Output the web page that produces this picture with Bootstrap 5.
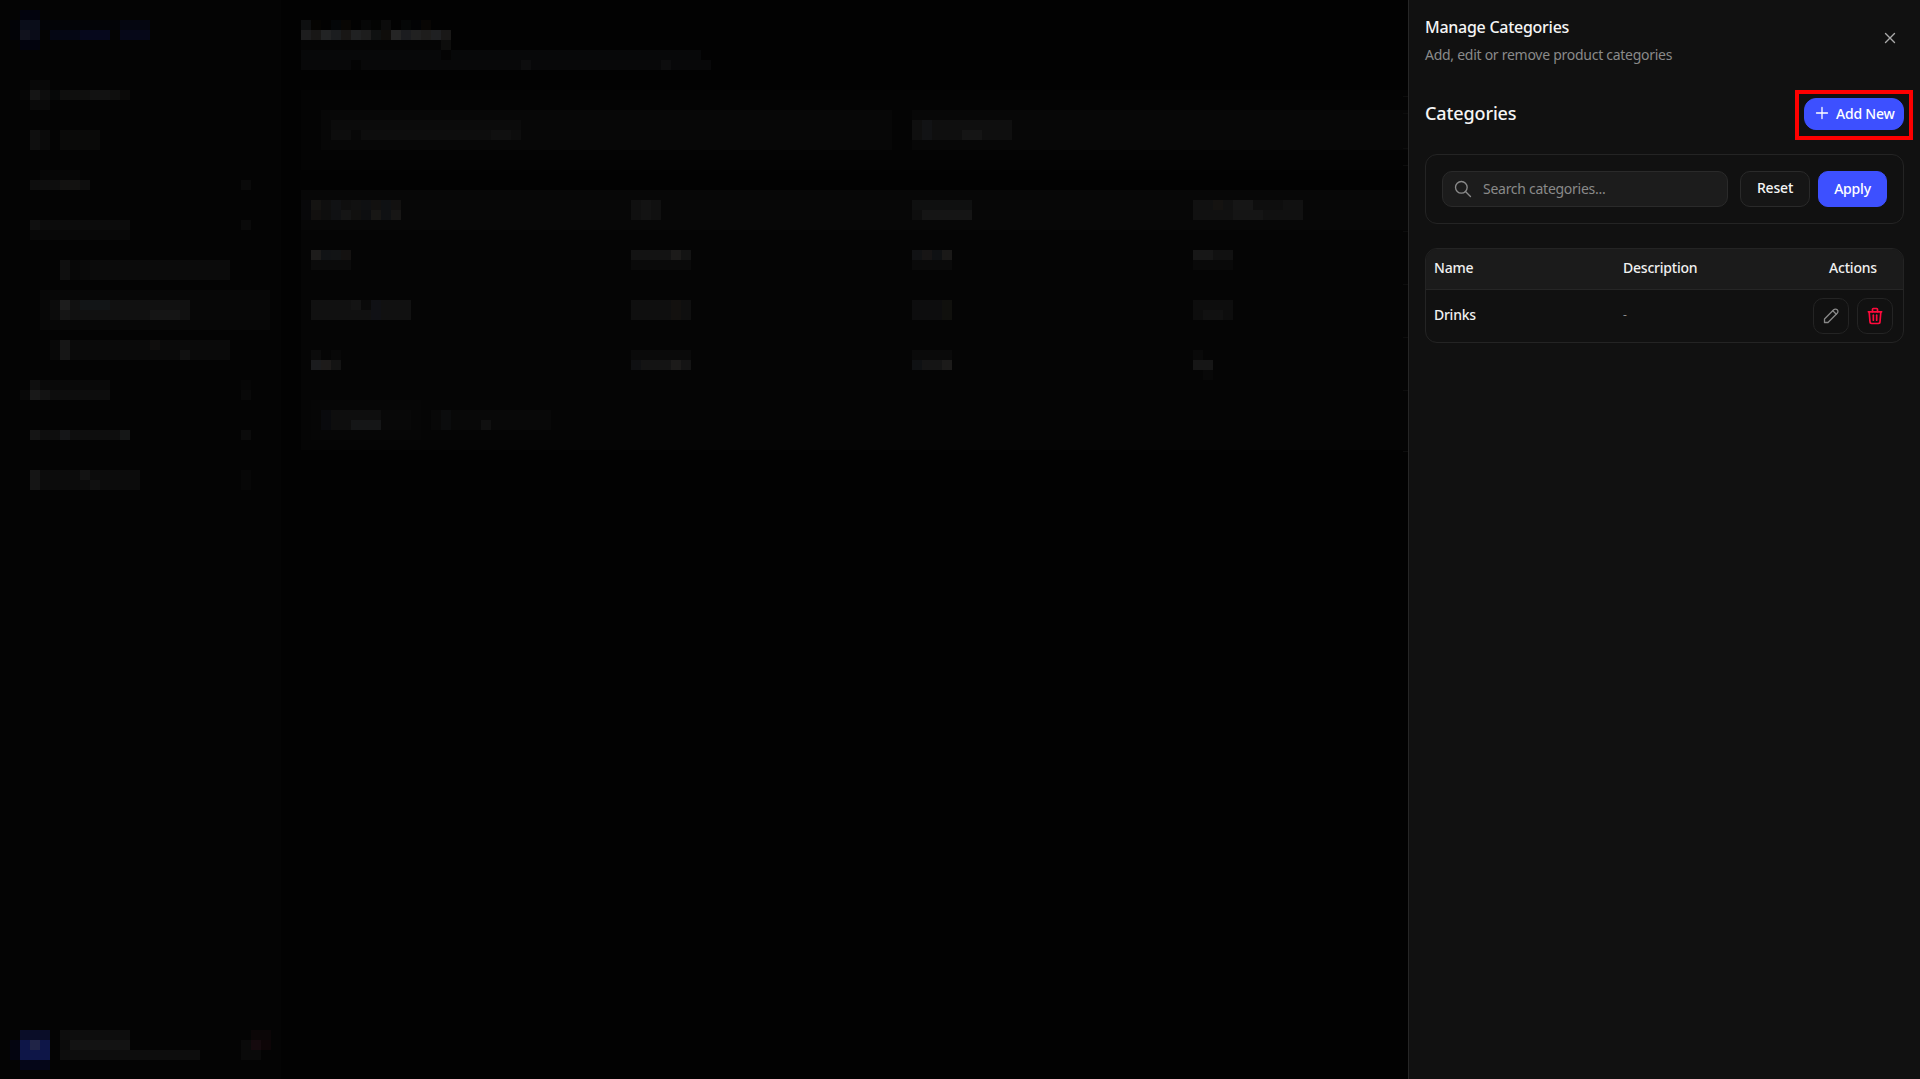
<!DOCTYPE html>
<html lang="en" data-bs-theme="dark">
<head>
<meta charset="utf-8">
<title>Manage Categories</title>
<link href="https://cdn.jsdelivr.net/npm/bootstrap@5.3.0/dist/css/bootstrap.min.css" rel="stylesheet">
<style>
html,body{height:100%;background:#050505;overflow:hidden}
body{font-family:"Noto Sans","Liberation Sans",sans-serif;font-size:14px;letter-spacing:-.27px}
.mosaic{display:block;height:1079px}
.side{width:281px;flex:none;background:#080808}
.page{flex:1 1 auto;background:#050505;min-width:0}
.drawer.offcanvas{--bs-offcanvas-width:512px;--bs-offcanvas-bg:#111;--bs-offcanvas-border-color:#262626;--bs-offcanvas-border-width:1px;--bs-offcanvas-color:#fff;visibility:visible;transform:none;padding:0 16px;overflow:hidden}
.d-head{height:90px;padding-top:16px}
.d-title{font-size:16px;font-weight:500;line-height:22px;margin:0;color:#f5f5f5}
.d-sub{font-size:14px;line-height:20px;color:#8a8a8a;margin-top:7px}
.x-btn{background:none;border:0;padding:0;color:#aaa;line-height:0;margin-top:16px;margin-right:8px}
.sec-title{font-size:18px;font-weight:500;margin:0;color:#f5f5f5;letter-spacing:-.12px}
.btn-brand{--bs-btn-bg:#3d50ff;--bs-btn-border-color:#3d50ff;--bs-btn-color:#fff;--bs-btn-hover-bg:#3d50ff;--bs-btn-hover-border-color:#3d50ff;--bs-btn-hover-color:#fff;font-size:14px;font-weight:500;border-radius:10px;letter-spacing:-.2px}
.add-btn{width:100px;height:32px;border-radius:12px;padding:0 0 2px 10px;gap:7px}
.add-btn::after{content:"";position:absolute;inset:-9px -10px -11px;border:4px solid #f00}
.sec-head{height:32px;margin-top:8px;margin-right:-1px;width:479px}
.filter{width:479px;height:70px;margin-top:24px;border:1px solid #242424;border-radius:12px;padding:16px;background:#111}
.search{width:286px;height:36px;background:#1c1c1c;border:1px solid #2a2a2a;border-radius:10px;padding:0 10px;gap:10px;color:#8a8a8a}
.search span{font-size:14px;padding-bottom:2px}
.btn-reset{--bs-btn-bg:#161616;--bs-btn-border-color:#2a2a2a;--bs-btn-color:#f5f5f5;--bs-btn-hover-bg:#161616;--bs-btn-hover-border-color:#2a2a2a;--bs-btn-hover-color:#f5f5f5;font-size:14px;font-weight:500;border-radius:10px;width:70px;height:36px;padding:0 0 3px;letter-spacing:-.2px}
.btn-apply{width:69px;height:36px;padding:0 0 2px}
.tbl-wrap{width:479px;margin-top:24px;border:1px solid #242424;border-radius:12px;overflow:hidden}
.cats{--bs-table-bg:transparent;--bs-table-color:#f0f0f0;--bs-table-border-color:#242424;table-layout:fixed;margin:0;font-size:14px}
.cats th{background:#1b1b1b;font-weight:500;height:40px;padding:0 8px 2px;vertical-align:middle;border-bottom:1px solid #262626;letter-spacing:-.22px}
.cats td{height:53px;padding:0 8px 2px;vertical-align:middle;border:0;font-weight:500}
.cats td.act{padding-bottom:0}
.cats td.dash{color:#8a8a8a;font-weight:400;font-size:12px}
.c1{width:189px}.c3{width:100px}
.icon-btn{width:36px;height:36px;border:1px solid #242424;border-radius:10px;background:transparent;padding:0;line-height:0}
.edit{color:#888}.del{color:#ff0a3c}
</style>
</head>
<body>
<div class="d-flex h-100">
<aside class="side">
<svg class="mosaic" width="281" height="1079" viewBox="0 0 281 1079" shape-rendering="crispEdges" aria-hidden="true">
<rect x="20" y="10" width="20" height="10" fill="#05071a"/>
<rect x="10" y="20" width="10" height="20" fill="#05060f"/>
<rect x="20" y="20" width="20" height="10" fill="#151a33"/>
<rect x="40" y="20" width="110" height="10" fill="#07090f"/>
<rect x="120" y="20" width="30" height="10" fill="#0a0c20"/>
<rect x="20" y="30" width="10" height="10" fill="#22253a"/>
<rect x="30" y="30" width="10" height="10" fill="#141830"/>
<rect x="50" y="30" width="30" height="10" fill="#0b0e28"/>
<rect x="80" y="30" width="30" height="10" fill="#0c1038"/>
<rect x="120" y="30" width="30" height="10" fill="#0c1030"/>
<rect x="20" y="40" width="20" height="10" fill="#05071a"/>
<rect x="30" y="80" width="20" height="10" fill="#111"/>
<rect x="20" y="90" width="10" height="10" fill="#0c0c0c"/>
<rect x="30" y="90" width="10" height="10" fill="#2a2a2a"/>
<rect x="40" y="90" width="10" height="10" fill="#1a1a1a"/>
<rect x="50" y="90" width="10" height="10" fill="#0d1010"/>
<rect x="60" y="90" width="70" height="10" fill="#1e1e1c"/>
<rect x="90" y="90" width="20" height="10" fill="#242424"/>
<rect x="120" y="90" width="10" height="10" fill="#171513"/>
<rect x="30" y="100" width="20" height="10" fill="#141414"/>
<rect x="30" y="130" width="10" height="20" fill="#1e1e1e"/>
<rect x="40" y="130" width="10" height="20" fill="#141414"/>
<rect x="60" y="130" width="40" height="20" fill="#151513"/>
<rect x="40" y="170" width="40" height="10" fill="#0d0d0d"/>
<rect x="30" y="180" width="60" height="10" fill="#1d1d1d"/>
<rect x="60" y="180" width="20" height="10" fill="#262422"/>
<rect x="241" y="180" width="10" height="10" fill="#151515"/>
<rect x="30" y="220" width="10" height="10" fill="#202020"/>
<rect x="40" y="220" width="90" height="10" fill="#181818"/>
<rect x="241" y="220" width="10" height="10" fill="#141414"/>
<rect x="30" y="230" width="100" height="10" fill="#101010"/>
<rect x="60" y="260" width="10" height="20" fill="#1e1e1e"/>
<rect x="70" y="260" width="10" height="20" fill="#0e0e0e"/>
<rect x="80" y="260" width="10" height="20" fill="#131313"/>
<rect x="90" y="260" width="140" height="20" fill="#161616"/>
<rect x="40" y="290" width="230" height="40" fill="#0e0e0e"/>
<rect x="60" y="300" width="10" height="10" fill="#3a3a3a"/>
<rect x="60" y="310" width="10" height="10" fill="#2a2a2a"/>
<rect x="50" y="300" width="10" height="20" fill="#181818"/>
<rect x="70" y="300" width="120" height="20" fill="#222"/>
<rect x="80" y="300" width="30" height="10" fill="#252a2e"/>
<rect x="150" y="310" width="30" height="10" fill="#2a2a2a"/>
<rect x="50" y="340" width="10" height="20" fill="#111"/>
<rect x="60" y="340" width="10" height="20" fill="#2c2c2c"/>
<rect x="70" y="340" width="160" height="20" fill="#151515"/>
<rect x="150" y="340" width="10" height="10" fill="#201c1a"/>
<rect x="180" y="350" width="10" height="10" fill="#222"/>
<rect x="30" y="380" width="10" height="10" fill="#1e1e1e"/>
<rect x="40" y="380" width="70" height="10" fill="#121212"/>
<rect x="20" y="390" width="10" height="10" fill="#111"/>
<rect x="30" y="390" width="10" height="10" fill="#333"/>
<rect x="40" y="390" width="10" height="10" fill="#262626"/>
<rect x="50" y="390" width="60" height="10" fill="#1a1a1a"/>
<rect x="241" y="380" width="10" height="10" fill="#0c0c0c"/>
<rect x="241" y="390" width="10" height="10" fill="#131313"/>
<rect x="30" y="430" width="10" height="10" fill="#2a2a2a"/>
<rect x="40" y="430" width="90" height="10" fill="#1c1c1c"/>
<rect x="60" y="430" width="10" height="10" fill="#2a2c30"/>
<rect x="120" y="430" width="10" height="10" fill="#2a2e2e"/>
<rect x="241" y="430" width="10" height="10" fill="#161616"/>
<rect x="30" y="470" width="10" height="20" fill="#2a2a2a"/>
<rect x="40" y="470" width="100" height="20" fill="#181818"/>
<rect x="80" y="470" width="10" height="10" fill="#262626"/>
<rect x="90" y="480" width="10" height="10" fill="#222"/>
<rect x="241" y="470" width="10" height="20" fill="#0f0f0f"/>
<rect x="20" y="1030" width="30" height="10" fill="#141a50"/>
<rect x="10" y="1040" width="10" height="20" fill="#080a20"/>
<rect x="20" y="1040" width="30" height="20" fill="#1c2c90"/>
<rect x="30" y="1040" width="10" height="10" fill="#40488f"/>
<rect x="20" y="1060" width="30" height="10" fill="#0a0c30"/>
<rect x="60" y="1030" width="70" height="10" fill="#1a1a1a"/>
<rect x="60" y="1040" width="10" height="10" fill="#161616"/>
<rect x="70" y="1040" width="60" height="10" fill="#262626"/>
<rect x="60" y="1050" width="140" height="10" fill="#1a1a1a"/>
<rect x="251" y="1030" width="20" height="10" fill="#170c0e"/>
<rect x="241" y="1040" width="10" height="10" fill="#141414"/>
<rect x="251" y="1040" width="10" height="10" fill="#2a141c"/>
<rect x="261" y="1040" width="10" height="10" fill="#1a0a0e"/>
<rect x="241" y="1050" width="20" height="10" fill="#141414"/>
</svg>
</aside>
<main class="page">
<svg class="mosaic" width="1127" height="1079" viewBox="281 0 1127 1079" shape-rendering="crispEdges" aria-hidden="true">
<rect x="301" y="20" width="10" height="10" fill="#1c1e20"/>
<rect x="311" y="20" width="10" height="10" fill="#0a0905"/>
<rect x="331" y="20" width="10" height="10" fill="#090c10"/>
<rect x="341" y="20" width="10" height="10" fill="#100c08"/>
<rect x="361" y="20" width="10" height="10" fill="#0c0f0e"/>
<rect x="371" y="20" width="10" height="10" fill="#060807"/>
<rect x="381" y="20" width="10" height="10" fill="#161616"/>
<rect x="401" y="20" width="10" height="10" fill="#0b0e0e"/>
<rect x="411" y="20" width="10" height="10" fill="#05060a"/>
<rect x="421" y="20" width="10" height="10" fill="#100c08"/>
<rect x="301" y="30" width="10" height="10" fill="#3a3a3c"/>
<rect x="311" y="30" width="10" height="10" fill="#302e2c"/>
<rect x="321" y="30" width="10" height="10" fill="#454648"/>
<rect x="331" y="30" width="10" height="10" fill="#363a3e"/>
<rect x="341" y="30" width="10" height="10" fill="#302c2a"/>
<rect x="351" y="30" width="10" height="10" fill="#404244"/>
<rect x="361" y="30" width="10" height="10" fill="#3a3a3a"/>
<rect x="371" y="30" width="10" height="10" fill="#1e2222"/>
<rect x="381" y="30" width="10" height="10" fill="#1e1a16"/>
<rect x="391" y="30" width="10" height="10" fill="#4a4a4a"/>
<rect x="401" y="30" width="10" height="10" fill="#36383e"/>
<rect x="411" y="30" width="10" height="10" fill="#434343"/>
<rect x="421" y="30" width="10" height="10" fill="#3c3a38"/>
<rect x="431" y="30" width="10" height="10" fill="#3e4044"/>
<rect x="441" y="30" width="10" height="10" fill="#32302e"/>
<rect x="301" y="40" width="140" height="10" fill="#0b0b0b"/>
<rect x="441" y="40" width="10" height="10" fill="#1a1a18"/>
<rect x="301" y="50" width="400" height="10" fill="#0f1012"/>
<rect x="441" y="50" width="10" height="10" fill="#090909"/>
<rect x="301" y="60" width="410" height="10" fill="#101113"/>
<rect x="351" y="60" width="10" height="10" fill="#080808"/>
<rect x="521" y="60" width="10" height="10" fill="#1a1b1d"/>
<rect x="661" y="60" width="10" height="10" fill="#1a1b1d"/>
<rect x="301" y="90" width="1107" height="80" fill="#080808"/>
<rect x="321" y="110" width="571" height="40" fill="#0e0e0e"/>
<rect x="912" y="110" width="496" height="40" fill="#0e0e0e"/>
<rect x="331" y="120" width="190" height="10" fill="#161616"/>
<rect x="331" y="130" width="190" height="10" fill="#1b1b1b"/>
<rect x="351" y="130" width="10" height="10" fill="#101010"/>
<rect x="491" y="130" width="20" height="10" fill="#202020"/>
<rect x="912" y="120" width="100" height="20" fill="#1e1e1e"/>
<rect x="922" y="120" width="10" height="20" fill="#24262a"/>
<rect x="962" y="130" width="20" height="10" fill="#2a2a2a"/>
<rect x="301" y="190" width="1107" height="40" fill="#0e0e0e"/>
<rect x="301" y="230" width="1107" height="220" fill="#0a0a0a"/>
<rect x="301" y="200" width="10" height="20" fill="#101114"/>
<rect x="311" y="200" width="10" height="10" fill="#2a2825"/>
<rect x="321" y="200" width="10" height="10" fill="#1e1e1e"/>
<rect x="331" y="200" width="10" height="10" fill="#222428"/>
<rect x="341" y="200" width="10" height="10" fill="#1e1e1e"/>
<rect x="351" y="200" width="10" height="10" fill="#222"/>
<rect x="361" y="200" width="10" height="10" fill="#1e2024"/>
<rect x="371" y="200" width="10" height="10" fill="#242220"/>
<rect x="381" y="200" width="10" height="10" fill="#1e2226"/>
<rect x="391" y="200" width="10" height="10" fill="#242220"/>
<rect x="311" y="210" width="10" height="10" fill="#24211f"/>
<rect x="321" y="210" width="10" height="10" fill="#1c1c1c"/>
<rect x="331" y="210" width="10" height="10" fill="#202226"/>
<rect x="341" y="210" width="10" height="10" fill="#2a2a2a"/>
<rect x="351" y="210" width="10" height="10" fill="#22201e"/>
<rect x="361" y="210" width="10" height="10" fill="#1a1c20"/>
<rect x="371" y="210" width="10" height="10" fill="#302e2b"/>
<rect x="381" y="210" width="10" height="10" fill="#1f2226"/>
<rect x="391" y="210" width="10" height="10" fill="#2e2c2a"/>
<rect x="631" y="200" width="30" height="20" fill="#212121"/>
<rect x="641" y="200" width="10" height="20" fill="#262626"/>
<rect x="912" y="200" width="60" height="10" fill="#1f2020"/>
<rect x="912" y="210" width="60" height="10" fill="#2a2a2a"/>
<rect x="912" y="210" width="10" height="10" fill="#1c1c1c"/>
<rect x="1193" y="200" width="110" height="20" fill="#222"/>
<rect x="1213" y="200" width="10" height="10" fill="#2a2622"/>
<rect x="1233" y="200" width="20" height="10" fill="#2c2c2c"/>
<rect x="1253" y="200" width="30" height="10" fill="#1c1c1c"/>
<rect x="1233" y="210" width="30" height="10" fill="#2a2a2a"/>
<rect x="311" y="250" width="10" height="10" fill="#3a3836"/>
<rect x="321" y="250" width="10" height="10" fill="#22262a"/>
<rect x="331" y="250" width="10" height="10" fill="#24282a"/>
<rect x="341" y="250" width="10" height="10" fill="#282422"/>
<rect x="311" y="260" width="40" height="10" fill="#161616"/>
<rect x="631" y="250" width="60" height="10" fill="#262626"/>
<rect x="671" y="250" width="10" height="10" fill="#383634"/>
<rect x="631" y="260" width="60" height="10" fill="#141414"/>
<rect x="912" y="250" width="10" height="10" fill="#222428"/>
<rect x="922" y="250" width="10" height="10" fill="#2e2b2a"/>
<rect x="932" y="250" width="10" height="10" fill="#1e2226"/>
<rect x="942" y="250" width="10" height="10" fill="#343230"/>
<rect x="912" y="260" width="40" height="10" fill="#141414"/>
<rect x="1193" y="250" width="20" height="10" fill="#2e2e2e"/>
<rect x="1213" y="250" width="20" height="10" fill="#222"/>
<rect x="1193" y="260" width="40" height="10" fill="#131313"/>
<rect x="311" y="300" width="100" height="20" fill="#222"/>
<rect x="351" y="300" width="10" height="10" fill="#282828"/>
<rect x="371" y="300" width="10" height="20" fill="#20232a"/>
<rect x="361" y="300" width="10" height="10" fill="#141414"/>
<rect x="631" y="300" width="60" height="20" fill="#1e1e1e"/>
<rect x="671" y="300" width="10" height="20" fill="#26231f"/>
<rect x="912" y="300" width="40" height="20" fill="#1a1a1c"/>
<rect x="942" y="300" width="10" height="20" fill="#21201a"/>
<rect x="1193" y="300" width="40" height="20" fill="#1b1b1b"/>
<rect x="1203" y="310" width="20" height="10" fill="#222"/>
<rect x="311" y="350" width="10" height="10" fill="#161616"/>
<rect x="331" y="350" width="10" height="10" fill="#111"/>
<rect x="311" y="360" width="10" height="10" fill="#36383c"/>
<rect x="321" y="360" width="10" height="10" fill="#3a3634"/>
<rect x="331" y="360" width="10" height="10" fill="#262626"/>
<rect x="631" y="350" width="60" height="10" fill="#151515"/>
<rect x="631" y="360" width="60" height="10" fill="#282828"/>
<rect x="631" y="360" width="10" height="10" fill="#1e2024"/>
<rect x="671" y="360" width="10" height="10" fill="#383634"/>
<rect x="912" y="350" width="40" height="10" fill="#141414"/>
<rect x="912" y="360" width="40" height="10" fill="#2a2a2a"/>
<rect x="912" y="360" width="10" height="10" fill="#1e2226"/>
<rect x="942" y="360" width="10" height="10" fill="#383634"/>
<rect x="1193" y="350" width="10" height="10" fill="#121212"/>
<rect x="1193" y="360" width="20" height="10" fill="#2c2c2c"/>
<rect x="1203" y="370" width="10" height="10" fill="#111"/>
<rect x="311" y="400" width="110" height="40" fill="#0d0d0d"/>
<rect x="321" y="410" width="60" height="20" fill="#1c1c1c"/>
<rect x="321" y="410" width="10" height="20" fill="#12151a"/>
<rect x="351" y="420" width="30" height="10" fill="#2a2c2e"/>
<rect x="381" y="410" width="30" height="20" fill="#111"/>
<rect x="431" y="410" width="120" height="20" fill="#111"/>
<rect x="441" y="410" width="10" height="20" fill="#16181a"/>
<rect x="481" y="420" width="10" height="10" fill="#202020"/>
<rect x="1403" y="96" width="5" height="1" fill="#1a1a1a"/>
<rect x="1403" y="113" width="5" height="1" fill="#1a1a1a"/>
<rect x="1403" y="148" width="5" height="1" fill="#1a1a1a"/>
<rect x="1403" y="165" width="5" height="1" fill="#1a1a1a"/>
<rect x="1403" y="231" width="5" height="1" fill="#1a1a1a"/>
<rect x="1403" y="284" width="5" height="1" fill="#1a1a1a"/>
<rect x="1403" y="337" width="5" height="1" fill="#1a1a1a"/>
<rect x="1403" y="390" width="5" height="1" fill="#1a1a1a"/>
<rect x="1403" y="451" width="5" height="1" fill="#1a1a1a"/>
</svg>
</main>
</div>

<div class="offcanvas offcanvas-end show drawer" tabindex="-1" aria-labelledby="drawerTitle">
  <div class="d-flex justify-content-between align-items-start d-head">
    <div>
      <h5 class="d-title" id="drawerTitle">Manage Categories</h5>
      <div class="d-sub">Add, edit or remove product categories</div>
    </div>
    <button type="button" class="x-btn" aria-label="Close">
      <svg width="12" height="12" viewBox="0 0 12 12" fill="none" stroke="currentColor" stroke-width="1.4" stroke-linecap="round"><path d="M1.5 1.5l9 9M10.5 1.5l-9 9"/></svg>
    </button>
  </div>
  <div class="d-flex justify-content-between align-items-center sec-head">
    <h5 class="sec-title">Categories</h5>
    <button type="button" class="btn btn-brand add-btn d-inline-flex align-items-center position-relative">
      <svg width="14" height="14" viewBox="0 0 14 14" fill="none" stroke="currentColor" stroke-width="1.3" stroke-linecap="round"><path d="M7 1.5v11M1.5 7h11"/></svg>
      <span>Add New</span>
    </button>
  </div>
  <div class="filter d-flex align-items-center">
    <div class="search d-flex align-items-center me-2">
      <svg width="20" height="20" viewBox="0 0 24 24" fill="none" stroke="currentColor" stroke-width="1.6" stroke-linecap="round" stroke-linejoin="round"><path d="M3 10a7 7 0 1 0 14 0a7 7 0 1 0 -14 0"/><path d="M21 21l-6 -6"/></svg>
      <span>Search categories...</span>
    </div>
    <button type="button" class="btn btn-reset ms-1 me-2">Reset</button>
    <button type="button" class="btn btn-brand btn-apply">Apply</button>
  </div>
  <div class="tbl-wrap">
    <table class="table cats">
      <colgroup><col class="c1"><col><col class="c3"></colgroup>
      <thead><tr><th>Name</th><th>Description</th><th class="text-center">Actions</th></tr></thead>
      <tbody><tr>
        <td>Drinks</td><td class="dash">-</td>
        <td class="act"><div class="d-flex justify-content-center gap-2">
          <button type="button" class="icon-btn edit" aria-label="Edit"><svg width="21" height="21" viewBox="0 0 24 24" fill="none" stroke="currentColor" stroke-width="1.5" stroke-linecap="round" stroke-linejoin="round"><path d="M4 20h4l10.5 -10.5a2.828 2.828 0 1 0 -4 -4l-10.5 10.5v4"/><path d="M13.5 6.5l4 4"/></svg></button>
          <button type="button" class="icon-btn del" aria-label="Delete"><svg width="20" height="20" viewBox="0 0 24 24" fill="none" stroke="currentColor" stroke-width="2" stroke-linecap="round" stroke-linejoin="round"><path d="M4 7h16"/><path d="M10 11v6"/><path d="M14 11v6"/><path d="M5 7l1 12a2 2 0 0 0 2 2h8a2 2 0 0 0 2 -2l1 -12"/><path d="M9 7v-3a1 1 0 0 1 1 -1h4a1 1 0 0 1 1 1v3"/></svg></button>
        </div></td>
      </tr></tbody>
    </table>
  </div>
</div>
<script src="https://cdn.jsdelivr.net/npm/bootstrap@5.3.0/dist/js/bootstrap.bundle.min.js"></script>
</body>
</html>
